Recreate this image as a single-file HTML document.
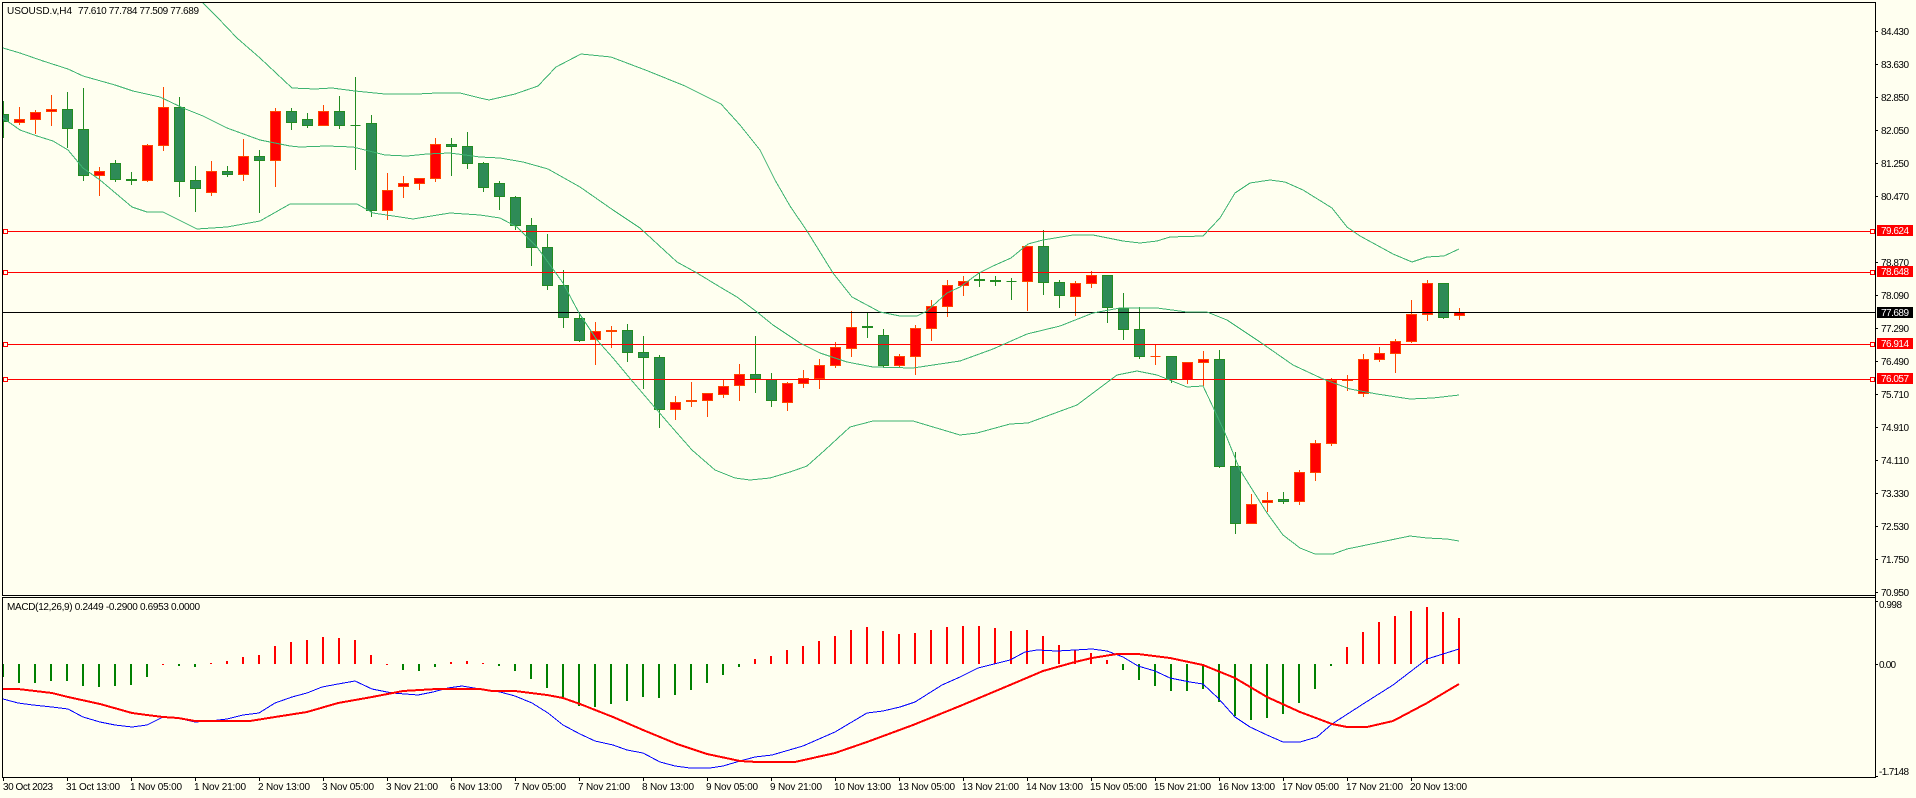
<!DOCTYPE html>
<html lang="en">
<head>
<meta charset="utf-8">
<title>USOUSD.v,H4</title>
<style>
html,body{margin:0;padding:0;width:1916px;height:798px;overflow:hidden;background:#FFFFF0}
svg{display:block}
text{font-family:"Liberation Sans",sans-serif;font-size:10px;fill:#000}
.w{fill:#fff}
</style>
</head>
<body>
<svg width="1916" height="798" viewBox="0 0 1916 798" xmlns="http://www.w3.org/2000/svg">
<defs>
<clipPath id="m"><rect x="3" y="3" width="1872" height="592"/></clipPath>
<clipPath id="s"><rect x="3" y="598" width="1872" height="179"/></clipPath>
</defs>
<rect width="1916" height="798" fill="#FFFFF0"/>

<g clip-path="url(#m)" shape-rendering="crispEdges">
<!-- wicks -->
<path fill="none" stroke="#228B22" d="M3.5 101V138M67.5 92V148M83.5 88V181M115.5 160V182M131.5 172V185M179.5 97V197M195.5 166V212M227.5 166V177M259.5 150V213M291.5 108V130M307.5 113V128M339.5 96V129M355.5 77V170M371.5 115V217M451.5 138V176M467.5 132V169M483.5 162V192M499.5 181V210M515.5 196V230M531.5 218V266M547.5 234V290M563.5 270V328M579.5 312V342M627.5 324V362M643.5 336V389M659.5 355V428M755.5 336V393M771.5 373V407M867.5 313V338M883.5 329V367M979.5 273V287M995.5 276V286M1011.5 278V300M1043.5 230V295M1059.5 280V308M1107.5 275V323M1123.5 293V340M1139.5 307V359M1171.5 356V383M1219.5 350V468M1235.5 452V534M1283.5 492V504M1443.5 283V319"/>
<path fill="none" stroke="#FF4500" d="M19.5 107V125M35.5 110V134M51.5 95V126M99.5 167V196M147.5 144V182M163.5 87V151M211.5 161V196M243.5 139V181M275.5 108V187M323.5 105V126M387.5 173V220M403.5 176V198M419.5 178V190M435.5 138V182M595.5 322V365M611.5 326V348M675.5 396V420M691.5 382V407M707.5 393V417M723.5 380V398M739.5 364V401M787.5 382V411M803.5 370V388M819.5 359V389M835.5 342V368M851.5 311V357M899.5 354V368M915.5 325V375M931.5 300V341M947.5 280V317M963.5 276V296M1027.5 246V311M1075.5 281V316M1091.5 271V288M1155.5 345V365M1187.5 362V384M1203.5 351V386M1251.5 494V524M1267.5 492V512M1299.5 470V505M1315.5 440V481M1331.5 378V446M1347.5 375V391M1363.5 354V397M1379.5 347V362M1395.5 339V373M1411.5 300V343M1427.5 280V321M1459.5 308V320"/>
<!-- bodies -->
<path fill="#2E8B57" stroke="#228B22" d="M-1.5 114.5h10v7h-10zM62.5 109.5h10v19h-10zM78.5 129.5h10v46h-10zM110.5 163.5h10v16h-10zM126.5 179.5h10v1h-10zM174.5 107.5h10v74h-10zM190.5 180.5h10v8h-10zM222.5 171.5h10v3h-10zM254.5 156.5h10v4h-10zM286.5 111.5h10v11h-10zM302.5 119.5h10v6h-10zM334.5 111.5h10v14h-10zM350.5 125.5h10v0h-10zM366.5 123.5h10v87h-10zM446.5 144.5h10v2h-10zM462.5 146.5h10v17h-10zM478.5 163.5h10v24h-10zM494.5 183.5h10v13h-10zM510.5 197.5h10v28h-10zM526.5 225.5h10v22h-10zM542.5 247.5h10v38h-10zM558.5 285.5h10v32h-10zM574.5 318.5h10v22h-10zM622.5 330.5h10v22h-10zM638.5 352.5h10v5h-10zM654.5 357.5h10v52h-10zM750.5 374.5h10v4h-10zM766.5 379.5h10v21h-10zM862.5 326.5h10v1h-10zM878.5 335.5h10v30h-10zM974.5 279.5h10v1h-10zM990.5 280.5h10v1h-10zM1006.5 281.5h10v0h-10zM1038.5 246.5h10v36h-10zM1054.5 282.5h10v13h-10zM1102.5 275.5h10v32h-10zM1118.5 308.5h10v21h-10zM1134.5 329.5h10v27h-10zM1166.5 356.5h10v23h-10zM1214.5 359.5h10v107h-10zM1230.5 466.5h10v57h-10zM1278.5 499.5h10v2h-10zM1438.5 283.5h10v34h-10z"/>
<path fill="#FF0000" stroke="#FF4500" d="M14.5 119.5h10v3h-10zM30.5 112.5h10v7h-10zM46.5 109.5h10v2h-10zM94.5 171.5h10v4h-10zM142.5 145.5h10v35h-10zM158.5 107.5h10v38h-10zM206.5 171.5h10v21h-10zM238.5 156.5h10v18h-10zM270.5 111.5h10v49h-10zM318.5 111.5h10v14h-10zM382.5 190.5h10v20h-10zM398.5 183.5h10v3h-10zM414.5 178.5h10v5h-10zM430.5 144.5h10v34h-10zM590.5 331.5h10v8h-10zM606.5 330.5h10v1h-10zM670.5 402.5h10v7h-10zM686.5 400.5h10v1h-10zM702.5 393.5h10v7h-10zM718.5 386.5h10v8h-10zM734.5 374.5h10v11h-10zM782.5 383.5h10v19h-10zM798.5 378.5h10v5h-10zM814.5 365.5h10v13h-10zM830.5 347.5h10v18h-10zM846.5 327.5h10v21h-10zM894.5 356.5h10v9h-10zM910.5 328.5h10v28h-10zM926.5 306.5h10v22h-10zM942.5 285.5h10v21h-10zM958.5 281.5h10v4h-10zM1022.5 246.5h10v35h-10zM1070.5 283.5h10v13h-10zM1086.5 275.5h10v8h-10zM1150.5 356.5h10v0h-10zM1182.5 362.5h10v17h-10zM1198.5 359.5h10v3h-10zM1246.5 504.5h10v19h-10zM1262.5 500.5h10v2h-10zM1294.5 472.5h10v29h-10zM1310.5 443.5h10v29h-10zM1326.5 380.5h10v63h-10zM1342.5 379.5h10v1h-10zM1358.5 359.5h10v34h-10zM1374.5 353.5h10v6h-10zM1390.5 341.5h10v12h-10zM1406.5 314.5h10v27h-10zM1422.5 283.5h10v31h-10zM1454.5 312.5h10v3h-10z"/>
<!-- horizontal lines -->
<rect x="3" y="312" width="1872" height="1" fill="#000"/>
<rect x="3" y="231" width="1872" height="1" fill="#f00"/>
<rect x="3" y="272" width="1872" height="1" fill="#f00"/>
<rect x="3" y="344" width="1872" height="1" fill="#f00"/>
<rect x="3" y="379" width="1872" height="1" fill="#f00"/>
<g fill="#FFFFF0" stroke="#f00">
<rect x="3.5" y="229.5" width="4" height="4"/><rect x="3.5" y="270.5" width="4" height="4"/><rect x="3.5" y="342.5" width="4" height="4"/><rect x="3.5" y="377.5" width="4" height="4"/>
<rect x="1870.5" y="229.5" width="4" height="4"/><rect x="1870.5" y="270.5" width="4" height="4"/><rect x="1870.5" y="342.5" width="4" height="4"/><rect x="1870.5" y="377.5" width="4" height="4"/>
</g>
<!-- bands -->
<g fill="none" stroke="#3CB371">
<polyline points="201,0 203,3 217,17 237,38 260,58 292,88 315,89 332,88 355,91 385,94 417,94 437,93 460,93 480,98 489,100 515,94 538,86 556,67 581,54 611,57 648,71 685,86 721,104 740,125 760,150 775,180 790,206 807,231 833,273 852,297 880,312 900,316 917,316 927,311 947,293 960,287 979,273 993,266 1011,258 1028,244 1043,240 1073,235 1093,235 1123,241 1140,243 1157,241 1170,237 1203,236 1220,218 1235,193 1250,183 1270,180 1285,182 1303,190 1332,208 1347,227 1360,236 1393,254 1412,262 1427,257 1444,256 1459,249"/>
<polyline points="3,48 20,53 43,61 68,69 83,76 115,85 133,91 160,97 183,108 203,116 227,128 260,140 290,146 300,147 327,146 353,147 385,155 407,156 427,154 450,153 480,157 500,158 523,162 548,169 580,187 613,210 640,228 677,262 697,273 720,287 737,297 757,312 773,325 800,343 820,353 847,362 873,367 913,368 960,361 993,349 1027,334 1060,326 1093,313 1120,308 1157,308 1187,312 1207,312 1227,320 1260,342 1293,365 1323,379 1350,389 1377,394 1410,399 1433,398 1459,395"/>
<polyline points="3,118 20,130 37,136 53,141 68,150 83,168 100,180 132,207 147,212 163,212 197,229 227,227 260,221 290,204 357,204 373,213 400,217 413,219 450,213 480,215 500,218 517,227 537,247 563,283 579,313 597,340 613,358 633,382 657,410 677,433 692,450 715,470 735,478 750,480 770,478 790,472 807,466 825,450 850,427 873,421 913,421 960,435 977,433 1010,424 1028,423 1077,405 1117,375 1137,371 1157,375 1187,387 1203,386 1213,407 1225,433 1240,470 1267,513 1283,535 1300,548 1315,554 1333,554 1347,549 1410,536 1427,538 1447,539 1459,541"/>
</g>
</g>

<!-- MACD -->
<g clip-path="url(#s)" shape-rendering="crispEdges">
<path fill="none" stroke="#008000" stroke-width="2" d="M3 664V677M19 664V683M35 664V683M51 664V681M67 664V681M83 664V686M99 664V687M115 664V686M131 664V685M147 664V677M179 664V666M195 664V667M403 664V670M419 664V671M435 664V667M499 664V666M515 664V671M531 664V679M547 664V688M563 664V698M579 664V706M595 664V707M611 664V704M627 664V701M643 664V697M659 664V698M675 664V695M691 664V690M707 664V683M723 664V675M739 664V667M1123 664V670M1139 664V680M1155 664V686M1171 664V691M1187 664V691M1203 664V689M1219 664V702M1235 664V716M1251 664V720M1267 664V718M1283 664V714M1299 664V703M1315 664V689M1331 664V666"/>
<path fill="none" stroke="#FF0000" stroke-width="2" d="M163 664V665M211 664V663M227 664V661M243 664V657M259 664V655M275 664V646M291 664V642M307 664V640M323 664V637M339 664V638M355 664V640M371 664V655M387 664V665M451 664V662M467 664V661M483 664V663M755 664V659M771 664V656M787 664V650M803 664V646M819 664V641M835 664V636M851 664V630M867 664V627M883 664V631M899 664V634M915 664V633M931 664V630M947 664V627M963 664V626M979 664V626M995 664V628M1011 664V631M1027 664V630M1043 664V636M1059 664V645M1075 664V650M1091 664V653M1107 664V660M1347 664V647M1363 664V632M1379 664V622M1395 664V616M1411 664V611M1427 664V607M1443 664V612M1459 664V618"/>
<polyline fill="none" stroke="#0000FF" points="3,699 18,703 33,705 52,707 68,709 83,717 100,722 115,725 132,727 147,725 163,717 177,718 195,722 210,721 227,719 243,715 259,713 275,703 292,697 307,693 322,687 338,684 355,681 372,689 392,693 418,695 433,692 448,688 462,686 480,689 500,692 515,696 532,703 548,713 563,725 580,734 595,741 613,745 627,750 643,753 660,762 675,766 690,768 710,768 723,766 740,761 755,757 772,755 803,746 835,732 867,713 883,711 900,707 915,702 942,685 960,677 978,668 1010,660 1025,652 1037,650 1057,651 1075,650 1092,649 1107,651 1123,657 1138,666 1155,671 1170,678 1190,682 1203,684 1218,698 1235,717 1250,727 1267,735 1283,742 1300,742 1317,737 1332,724 1363,704 1393,685 1427,659 1443,654 1459,649"/>
<polyline fill="none" stroke="#FF0000" stroke-width="2" points="3,689 18,689 35,691 52,693 68,697 100,704 132,713 147,715 163,717 178,718 195,721 250,721 275,717 307,712 338,703 372,697 403,691 437,689 480,689 492,691 515,691 547,695 563,698 580,704 613,717 643,730 677,744 707,754 740,761 757,762 795,762 835,753 867,742 913,725 960,706 1010,685 1043,671 1075,662 1092,658 1117,654 1138,654 1170,658 1203,665 1235,678 1267,697 1300,712 1332,724 1347,727 1367,727 1393,721 1427,703 1459,684"/>
</g>

<!-- frame -->
<g fill="#000" shape-rendering="crispEdges">
<rect x="2" y="2" width="1874" height="1"/>
<rect x="2" y="2" width="1" height="594"/>
<rect x="2" y="595" width="1874" height="1"/>
<rect x="2" y="597" width="1874" height="1"/>
<rect x="2" y="597" width="1" height="181"/>
<rect x="2" y="777" width="1874" height="1"/>
<rect x="1875" y="2" width="1" height="776"/>
</g>
<path fill="none" stroke="#000" shape-rendering="crispEdges" d="M1876 31.5h2M1876 64.5h2M1876 97.5h2M1876 130.5h2M1876 163.5h2M1876 196.5h2M1876 262.5h2M1876 295.5h2M1876 328.5h2M1876 361.5h2M1876 394.5h2M1876 427.5h2M1876 460.5h2M1876 493.5h2M1876 526.5h2M1876 559.5h2M1876 592.5h2M1876 601.5h2M1876 664.5h2M1876 776.5h2M3.5 778v3M67.5 778v3M131.5 778v3M195.5 778v3M259.5 778v3M323.5 778v3M387.5 778v3M451.5 778v3M515.5 778v3M579.5 778v3M643.5 778v3M707.5 778v3M771.5 778v3M835.5 778v3M899.5 778v3M963.5 778v3M1027.5 778v3M1091.5 778v3M1155.5 778v3M1219.5 778v3M1283.5 778v3M1347.5 778v3M1411.5 778v3"/>

<!-- header text -->
<text x="7" y="14" textLength="65">USOUSD.v,H4</text>
<text x="78" y="14" textLength="121">77.610 77.784 77.509 77.689</text>
<text x="7" y="610" textLength="193">MACD(12,26,9) 0.2449 -0.2900 0.6953 0.0000</text>

<!-- price axis -->
<text x="1881" y="35" textLength="28">84.430</text>
<text x="1881" y="68" textLength="28">83.630</text>
<text x="1881" y="101" textLength="28">82.850</text>
<text x="1881" y="134" textLength="28">82.050</text>
<text x="1881" y="167" textLength="28">81.250</text>
<text x="1881" y="200" textLength="28">80.470</text>
<text x="1881" y="266" textLength="28">78.870</text>
<text x="1881" y="299" textLength="28">78.090</text>
<text x="1881" y="332" textLength="28">77.290</text>
<text x="1881" y="365" textLength="28">76.490</text>
<text x="1881" y="398" textLength="28">75.710</text>
<text x="1881" y="431" textLength="28">74.910</text>
<text x="1881" y="464" textLength="28">74.110</text>
<text x="1881" y="497" textLength="28">73.330</text>
<text x="1881" y="530" textLength="28">72.530</text>
<text x="1881" y="563" textLength="28">71.750</text>
<text x="1881" y="596" textLength="28">70.950</text>

<g shape-rendering="crispEdges">
<rect x="1877" y="225" width="36" height="11" fill="#f00"/>
<rect x="1877" y="266" width="36" height="11" fill="#f00"/>
<rect x="1877" y="307" width="36" height="11" fill="#000"/>
<rect x="1877" y="338" width="36" height="11" fill="#f00"/>
<rect x="1877" y="373" width="36" height="11" fill="#f00"/>
</g>
<text class="w" x="1881" y="234" textLength="28">79.624</text>
<text class="w" x="1881" y="275" textLength="28">78.648</text>
<text class="w" x="1881" y="316" textLength="28">77.689</text>
<text class="w" x="1881" y="347" textLength="28">76.914</text>
<text class="w" x="1881" y="382" textLength="28">76.057</text>

<!-- MACD axis -->
<text x="1879" y="608" textLength="23">0.998</text>
<text x="1879" y="668" textLength="17">0.00</text>
<text x="1879" y="775" textLength="30">-1.7148</text>

<!-- time axis -->
<text x="3" y="790" textLength="50">30 Oct 2023</text>
<text x="66" y="790" textLength="54">31 Oct 13:00</text>
<text x="130" y="790" textLength="52">1 Nov 05:00</text>
<text x="194" y="790" textLength="52">1 Nov 21:00</text>
<text x="258" y="790" textLength="52">2 Nov 13:00</text>
<text x="322" y="790" textLength="52">3 Nov 05:00</text>
<text x="386" y="790" textLength="52">3 Nov 21:00</text>
<text x="450" y="790" textLength="52">6 Nov 13:00</text>
<text x="514" y="790" textLength="52">7 Nov 05:00</text>
<text x="578" y="790" textLength="52">7 Nov 21:00</text>
<text x="642" y="790" textLength="52">8 Nov 13:00</text>
<text x="706" y="790" textLength="52">9 Nov 05:00</text>
<text x="770" y="790" textLength="52">9 Nov 21:00</text>
<text x="834" y="790" textLength="57">10 Nov 13:00</text>
<text x="898" y="790" textLength="57">13 Nov 05:00</text>
<text x="962" y="790" textLength="57">13 Nov 21:00</text>
<text x="1026" y="790" textLength="57">14 Nov 13:00</text>
<text x="1090" y="790" textLength="57">15 Nov 05:00</text>
<text x="1154" y="790" textLength="57">15 Nov 21:00</text>
<text x="1218" y="790" textLength="57">16 Nov 13:00</text>
<text x="1282" y="790" textLength="57">17 Nov 05:00</text>
<text x="1346" y="790" textLength="57">17 Nov 21:00</text>
<text x="1410" y="790" textLength="57">20 Nov 13:00</text>
</svg>
</body>
</html>
